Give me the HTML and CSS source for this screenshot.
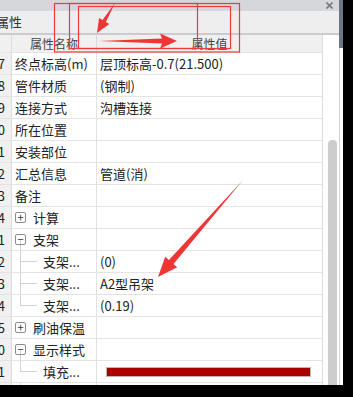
FILE: index.html
```html
<!DOCTYPE html>
<html>
<head>
<meta charset="utf-8">
<link rel="stylesheet" href="styles.css">
</head>
<body>
<div class="screen">
  <div class="window">
    <div class="topbar">
      <svg class="close" width="7" height="7" viewBox="0 0 7 7"><path d="M0.5 0.5L6.5 6.5M6.5 0.5L0.5 6.5" stroke="#7a7a7a" stroke-width="1.6"/></svg>
    </div>
    <div class="titlebar"><span>属性</span></div>
    <div class="content">
      <div class="grid">
        <div class="row head">
          <div class="num"></div>
          <div class="name">属性名称</div>
          <div class="value">属性值</div>
        </div>
        <div class="row"><div class="num">17</div><div class="name">终点标高(m)</div><div class="value">层顶标高-0.7(21.500)</div></div>
        <div class="row"><div class="num">18</div><div class="name">管件材质</div><div class="value">(钢制)</div></div>
        <div class="row"><div class="num">19</div><div class="name">连接方式</div><div class="value">沟槽连接</div></div>
        <div class="row"><div class="num">20</div><div class="name">所在位置</div><div class="value"></div></div>
        <div class="row"><div class="num">21</div><div class="name">安装部位</div><div class="value"></div></div>
        <div class="row"><div class="num">22</div><div class="name">汇总信息</div><div class="value">管道(消)</div></div>
        <div class="row"><div class="num">23</div><div class="name">备注</div><div class="value"></div></div>
        <div class="row"><div class="num">24</div><div class="name group"><span class="box">+</span>计算</div><div class="value"></div></div>
        <div class="row"><div class="num">31</div><div class="name group open"><span class="box">−</span>支架</div><div class="value"></div></div>
        <div class="row"><div class="num">32</div><div class="name child">支架...</div><div class="value">(0)</div></div>
        <div class="row"><div class="num">33</div><div class="name child">支架...</div><div class="value">A2型吊架</div></div>
        <div class="row"><div class="num">34</div><div class="name child last">支架...</div><div class="value">(0.19)</div></div>
        <div class="row"><div class="num">35</div><div class="name group"><span class="box">+</span>刷油保温</div><div class="value"></div></div>
        <div class="row"><div class="num">40</div><div class="name group open"><span class="box">−</span>显示样式</div><div class="value"></div></div>
        <div class="row"><div class="num">41</div><div class="name child last">填充...</div><div class="value"><div class="swatch"></div></div></div>
        <div class="row"><div class="num">42</div><div class="name child">边框...</div><div class="value"></div></div>
      </div>
      <div class="track"><div class="thumb"></div></div>
    </div>
  </div>
  <div class="edge"><div class="edge-top"></div></div>

  <!-- 截图上的红色标注 -->
  <svg class="marks" width="353" height="397" viewBox="0 0 353 397">
    <g fill="none" stroke="#f03a3a" stroke-width="1.2">
      <rect x="54.5" y="3.5" width="185" height="48.5"/>
      <rect x="69.5" y="3.5" width="128" height="45"/>
      <rect x="78.5" y="6.5" width="152" height="42"/>
    </g>
    <g fill="#f03535">
      <polygon points="115,3 105.9,22 109.3,24.1 97,33 99.1,17.9 102.5,20"/>
      <polygon points="99,41 162,38.5 160,33.5 177,41 160,48.5 162,43.5"/>
      <polygon points="243,180 173.5,264 177.2,267.3 158,277 165.2,256.7 168.9,260"/>
    </g>
  </svg>
</div>
</body>
</html>
```
FILE: styles.css
```css
*{
	box-sizing: border-box;
}
body{
	margin: 0;
	background: #000;
	font-family: "Noto Sans CJK SC", sans-serif;
	font-size: 13px;
	color: #222;
	overflow: hidden;
}
.screen{
	position: relative;
	width: 353px;
	height: 397px;
	display: flex;
}
.window{
	width: 339px;
	height: 385px;
	display: flex;
	flex-direction: column;
	background: #fff;
}
.edge{
	width: 4px;
	height: 385px;
	background: #fff;
	border-left: 1px solid #d4d4d4;
}
.edge-top{
	height: 48px;
	margin-left: -1px;
	background: #6b7684;
}
.topbar{
	height: 11px;
	background: #d6d7db;
	display: flex;
	justify-content: flex-end;
	align-items: center;
	padding-right: 6px;
}
.titlebar{
	height: 24px;
	background: #eeeeef;
	border-bottom: 2px solid #cbcbcf;
	line-height: 22px;
	overflow: hidden;
	white-space: nowrap;
	color: #333;
}
.titlebar span{
	margin-left: -4px;
}
.content{
	flex: 1;
	display: flex;
	min-height: 0;
}
.grid{
	width: 323px;
	border-right: 1px solid #dedede;
	overflow: hidden;
}
.row{
	display: flex;
	height: 22px;
	line-height: 21px;
	border-bottom: 1px solid #e4e4e4;
	white-space: nowrap;
}
.row.head{
	height: 18px;
	line-height: 17px;
	background: #f0f0f0;
	color: #444;
	font-size: 12px;
}
.num{
	width: 12px;
	flex: none;
	display: flex;
	justify-content: flex-end;
	padding-right: 6px;
	background: #f0f0f0;
	border-right: 1px solid #dcdcdc;
	overflow: hidden;
}
.name{
	width: 85px;
	flex: none;
	padding-left: 3px;
	border-right: 1px solid #e2e2e2;
	display: flex;
	align-items: center;
	overflow: hidden;
}
.head .name, .head .value{
	justify-content: center;
	padding-left: 0;
}
.head .name{
	border-right-color: #dadada;
}
.value{
	flex: 1;
	padding-left: 3px;
	display: flex;
	align-items: center;
	overflow: hidden;
}
.box{
	width: 11px;
	height: 11px;
	margin-right: 7px;
	border: 1px solid #8c8c8c;
	border-radius: 2px;
	display: flex;
	align-items: center;
	justify-content: center;
	font-size: 11px;
	line-height: 9px;
	color: #333;
}
.group.open{
	background: linear-gradient(#cfcfcf, #cfcfcf) 8px calc(50% + 6px) / 1px 50% no-repeat;
}
.child{
	padding-left: 31px;
	background:
		linear-gradient(#d2d2d2, #d2d2d2) 8px 0 / 1px 100% no-repeat,
		linear-gradient(#d2d2d2, #d2d2d2) 8px 50% / 17px 1px no-repeat;
}
.child.last{
	background:
		linear-gradient(#d2d2d2, #d2d2d2) 8px 0 / 1px 50% no-repeat,
		linear-gradient(#d2d2d2, #d2d2d2) 8px 50% / 17px 1px no-repeat;
}
.swatch{
	margin-left: 6px;
	width: 205px;
	height: 10px;
	background: #aa0000;
	border: 1px solid #c9b0b0;
}
.track{
	width: 16px;
	background: #fff;
	padding: 105px 2px 0 5px;
}
.thumb{
	height: 100%;
	width: 9px;
	background: #cdcdcd;
	border-radius: 4px 4px 0 0;
}
.marks{
	position: absolute;
	left: 0;
	top: 0;
	pointer-events: none;
}
```
